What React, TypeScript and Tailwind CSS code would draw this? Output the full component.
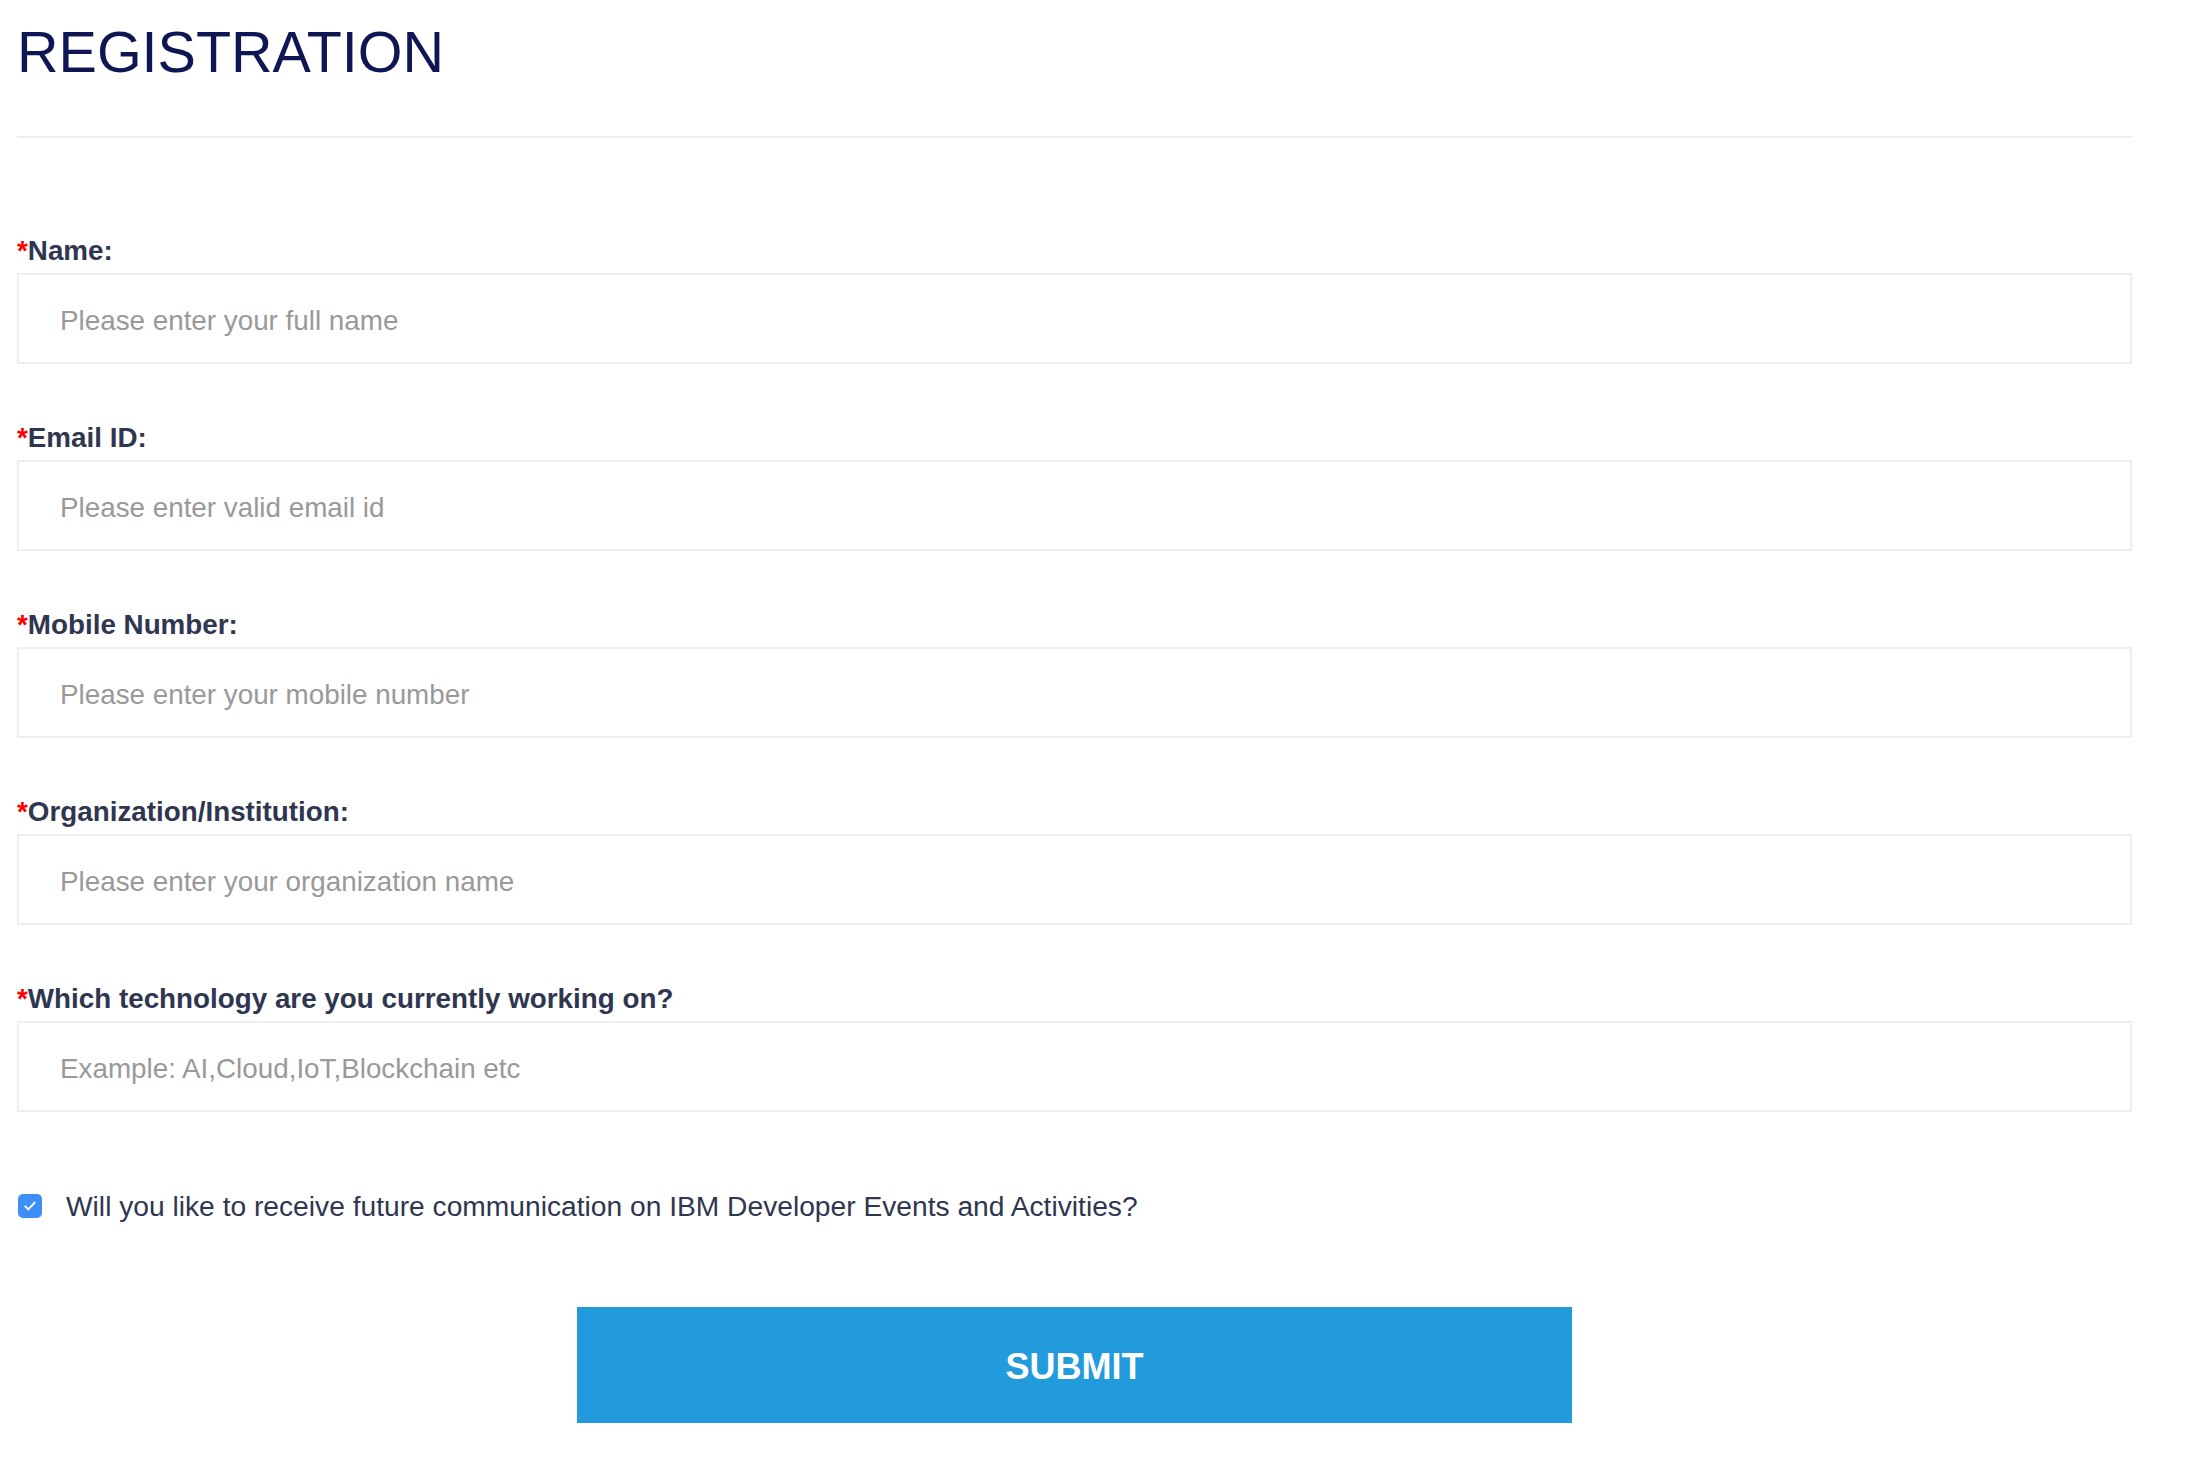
import React from 'react';

const fields = [
    { label: 'Name:', placeholder: 'Please enter your full name' },
    { label: 'Email ID:', placeholder: 'Please enter valid email id' },
    { label: 'Mobile Number:', placeholder: 'Please enter your mobile number' },
    { label: 'Organization/Institution:', placeholder: 'Please enter your organization name' },
    { label: 'Which technology are you currently working on?', placeholder: 'Example: AI,Cloud,IoT,Blockchain etc' },
];

const Field: React.FC<{ label: string; placeholder: string }> = ({ label, placeholder }) => (
    <div className="flex flex-col">
        <label className="text-[27.8px] leading-[32px] font-bold text-[#2f3650] mb-[6px]">
            <span className="text-[#f00]">*</span>
            {label}
        </label>
        <input
            type="text"
            placeholder={placeholder}
            className="h-[91px] w-full border-2 border-[#eeeeee] bg-white pl-[41px] pt-[4px] text-[27.8px] text-[#333] placeholder:text-[#999] outline-none"
        />
    </div>
);

export default function App() {
    return (
        <div className="min-h-[1482px] bg-white font-['Liberation_Sans',Arial,sans-serif]">
            <div className="ml-[17px] w-[2115px]">
                <h1 className="pt-[18px] text-[57.5px] leading-[68px] text-[#0f1654]">REGISTRATION</h1>
                <div className="mt-[50px] h-[2px] bg-[#eeeeee]" />

                <div className="mt-[97px] flex flex-col gap-[58px]">
                    {fields.map(f => (
                        <Field key={f.label} label={f.label} placeholder={f.placeholder} />
                    ))}
                </div>

                <label className="mt-[76px] flex items-center">
                    <span className="ml-[1px] flex h-[24px] w-[24px] items-center justify-center rounded-[5px] bg-[#3e8ef7]">
                        <svg viewBox="0 0 24 24" className="h-[16px] w-[16px]" fill="none" stroke="white" strokeWidth="3" strokeLinecap="round" strokeLinejoin="round">
                            <path d="M5 12.5l4.5 4.5L19 7" />
                        </svg>
                    </span>
                    <span className="ml-[24px] text-[28.2px] leading-[36px] text-[#2f3650]">
                        Will you like to receive future communication on IBM Developer Events and Activities?
                    </span>
                </label>

                <div className="mt-[83px] flex justify-center">
                    <button className="h-[116px] w-[995px] bg-[#219bdc] pt-[4px] text-[36px] font-bold text-white">SUBMIT</button>
                </div>
            </div>
        </div>
    );
}
